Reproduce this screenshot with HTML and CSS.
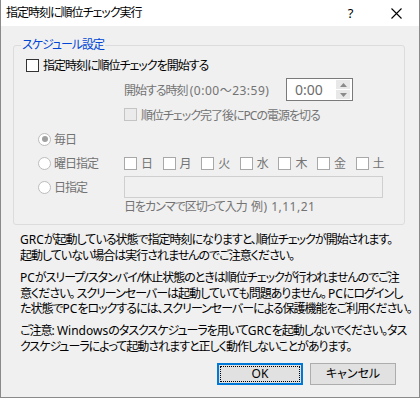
FILE: index.html
```html
<!DOCTYPE html>
<html lang="ja">
<head>
<meta charset="utf-8">
<link rel="stylesheet" href="styles.css">
</head>
<body>
<div class="window">
  <div class="titlebar">
    <span class="title">指定時刻に順位チェック実行</span>
    <span class="tb-btn">?</span>
    <span class="tb-btn"><svg width="11" height="11" viewBox="0 0 11 11"><path d="M0.5 0.5L10.5 10.5M10.5 0.5L0.5 10.5" stroke="#000" stroke-width="1.1" fill="none"/></svg></span>
  </div>
  <div class="content">
    <div class="group">
      <div class="legend">スケジュール設定</div>
      <div class="row row1">
        <span class="cb"></span><span class="lbl">指定時刻に順位チェックを開始する</span>
      </div>
      <div class="row row2 indent">
        <span class="time-lbl gray">開始する時刻 <span class="lat wide">(0:00～23:59)</span></span>
        <div class="time">
          <span class="time-val">0:00</span>
          <div class="spin">
            <span class="spin-btn"><svg width="7" height="4" viewBox="0 0 7 4"><path d="M0 4L3.5 0L7 4Z" fill="#8a8a8a"/></svg></span>
            <span class="spin-btn"><svg width="7" height="4" viewBox="0 0 7 4"><path d="M0 0L3.5 4L7 0Z" fill="#8a8a8a"/></svg></span>
          </div>
        </div>
      </div>
      <div class="row row3 indent">
        <span class="cb cb-dis"></span><span class="lbl gray">順位チェック完了後にPCの電源を切る</span>
      </div>
      <div class="row radio-row first-radio">
        <div class="radio-col"><span class="radio checked"><span class="dot"></span></span><span class="gray">毎日</span></div>
      </div>
      <div class="row radio-row">
        <div class="radio-col"><span class="radio"></span><span class="gray">曜日指定</span></div>
        <div class="days">
          <div class="day"><span class="cb cb-day"></span><span class="gray">日</span></div>
          <div class="day"><span class="cb cb-day"></span><span class="gray">月</span></div>
          <div class="day"><span class="cb cb-day"></span><span class="gray">火</span></div>
          <div class="day"><span class="cb cb-day"></span><span class="gray">水</span></div>
          <div class="day"><span class="cb cb-day"></span><span class="gray">木</span></div>
          <div class="day"><span class="cb cb-day"></span><span class="gray">金</span></div>
          <div class="day"><span class="cb cb-day"></span><span class="gray">土</span></div>
        </div>
      </div>
      <div class="row radio-row">
        <div class="radio-col"><span class="radio"></span><span class="gray">日指定</span></div>
        <div class="text-input"></div>
      </div>
      <div class="hint gray">日をカンマで区切って入力&nbsp;&nbsp;<span class="lat wide">例) 1,11,21</span></div>
    </div>
    <p class="note n1"><span class="lat">GRC</span>が起動している状態で指定時刻になりますと、順位チェックが開始されます。<br>起動していない場合は実行されませんのでご注意ください。</p>
    <p class="note n2"><span class="lat">PC</span>がスリープ/スタンバイ/休止状態のときは順位チェックが行われませんのでご注<br>意ください。 スクリーンセーバーは起動していても問題ありません。 <span class="lat">PC</span>にログインし<br>た状態で<span class="lat">PC</span>をロックするには、スクリーンセーバーによる保護機能をご利用ください。</p>
    <p class="note n3">ご注意:<span class="lat"> Windows</span>のタスクスケジューラを用いて<span class="lat">GRC</span>を起動しないでください。タス<br>クスケジューラによって起動されますと正しく動作しないことがあります。</p>
    <div class="buttons">
      <button class="btn btn-ok"><span class="lat">OK</span></button>
      <button class="btn">キャンセル</button>
    </div>
  </div>
</div>
</body>
</html>
```
FILE: styles.css
```css
html, body {
  margin: 0;
  padding: 0;
  background: #f0f0f0;
}
.window {
  width: 420px;
  height: 398px;
  box-sizing: border-box;
  border: 1px solid #8a8a8a;
  border-top: none;
  background: #f0f0f0;
  font-family: "Noto Sans", "Noto Sans CJK JP", sans-serif;
  font-size: 12px;
  font-feature-settings: "palt";
  letter-spacing: -1px;
  color: #000;
  overflow: hidden;
}
.lat {
  letter-spacing: 0;
}
.wide {
  letter-spacing: 0.5px;
}
.titlebar {
  height: 26px;
  background: #fff;
  display: flex;
  align-items: center;
  padding-left: 5px;
}
.title {
  flex: 1;
  line-height: 16px;
}
.tb-btn {
  width: 46px;
  height: 26px;
  display: flex;
  align-items: center;
  justify-content: center;
  font-size: 13px;
}
.content {
  padding: 0 14px 0 12px;
}
.group {
  margin-top: 19px;
  border: 1px solid #dcdcdc;
  border-radius: 3px;
  padding-bottom: 9px;
}
.legend {
  width: fit-content;
  margin: -9px 0 0 7px;
  padding: 0 1px;
  height: 16px;
  line-height: 16px;
  background: #f0f0f0;
  color: #0046d5;
}
.row {
  display: flex;
  align-items: center;
  white-space: nowrap;
}
.row1 {
  height: 24px;
  padding-left: 12px;
}
.indent {
  padding-left: 110px;
}
.row2 {
  height: 23px;
  margin-top: 1px;
}
.row3 {
  height: 23px;
  margin-top: 2px;
}
.gray {
  color: #737373;
}
.lbl {
  margin-left: 4px;
}
.cb {
  width: 13px;
  height: 13px;
  box-sizing: border-box;
  border: 1px solid #333;
  background: #fff;
  flex: none;
}
.cb-dis {
  border-color: #c4c4c4;
  background: #ebebeb;
}
.cb-day {
  border-color: #a8a8a8;
  background: #fff;
  margin-right: 4px;
}
.time-lbl {
  width: 162px;
}
.time {
  width: 67px;
  height: 23px;
  box-sizing: border-box;
  border: 1px solid #7a7a7a;
  background: #fff;
  display: flex;
  align-items: center;
  padding-left: 8px;
}
.time-val {
  font-size: 14px;
  color: #6d6d6d;
  letter-spacing: 0;
}
.spin {
  margin-left: auto;
  margin-right: 2px;
  display: flex;
  flex-direction: column;
  gap: 1px;
}
.spin-btn {
  width: 14px;
  height: 9px;
  background: #e8e8e8;
  display: flex;
  align-items: center;
  justify-content: center;
}
.first-radio {
  margin-top: 1px;
}
.radio-row {
  height: 24px;
  padding-left: 24px;
}
.radio-col {
  width: 86px;
  display: flex;
  align-items: center;
}
.radio {
  width: 13px;
  height: 13px;
  box-sizing: border-box;
  border-radius: 50%;
  border: 1px solid #bcbcbc;
  background: #fff;
  margin-right: 3px;
  display: flex;
  align-items: center;
  justify-content: center;
  flex: none;
}
.dot {
  width: 6px;
  height: 6px;
  border-radius: 50%;
  background: #a0a0a0;
}
.days {
  display: flex;
}
.day {
  width: 38.6px;
  display: flex;
  align-items: center;
}
.text-input {
  width: 259px;
  height: 22px;
  box-sizing: border-box;
  border: 1px solid #cfcfcf;
  background: #f0f0f0;
}
.hint {
  height: 16px;
  line-height: 16px;
  padding-left: 110px;
}
.note {
  margin: 0 0 0 7px;
  line-height: 15.6px;
  white-space: nowrap;
}
.n1 {
  margin-top: 7px;
}
.n2 {
  margin-top: 7px;
}
.n3 {
  margin-top: 6px;
}
.buttons {
  display: flex;
  justify-content: flex-end;
  gap: 7px;
  margin-top: 9px;
  margin-right: 9px;
}
.btn {
  width: 86px;
  height: 22px;
  box-sizing: border-box;
  padding: 0;
  background: #e1e1e1;
  border: 1px solid #adadad;
  font: inherit;
  color: #000;
  line-height: 18px;
}
.btn-ok {
  border: 2px solid #0078d7;
  outline: 1px dotted #000;
  outline-offset: -4px;
}
```
